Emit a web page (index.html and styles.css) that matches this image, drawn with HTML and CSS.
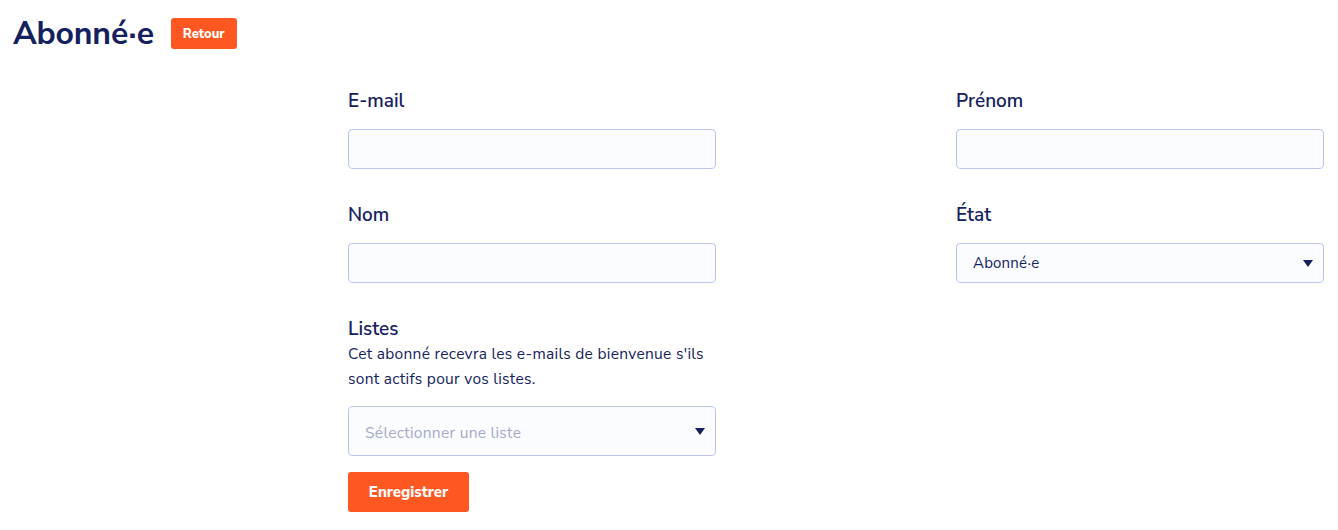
FILE: index.html
```html
<!DOCTYPE html>
<html lang="fr">
<head>
<meta charset="utf-8">
<title>Abonné·e</title>
<link rel="stylesheet" href="styles.css">
</head>
<body>
<div class="page">
  <header class="header">
    <h1 class="title">Abonné·e</h1>
    <button class="btn btn-small" type="button">Retour</button>
  </header>
  <form class="form">
    <div class="field">
      <label class="label">E-mail</label>
      <input class="input" type="text">
    </div>
    <div class="field">
      <label class="label">Prénom</label>
      <input class="input" type="text">
    </div>
    <div class="field">
      <label class="label">Nom</label>
      <input class="input" type="text">
    </div>
    <div class="field">
      <label class="label">État</label>
      <div class="select">
        <span class="select-value">Abonné·e</span>
        <svg class="caret" width="10" height="7" viewBox="0 0 10 7"><path d="M0 0H10L5 7Z" fill="#14215e"/></svg>
      </div>
    </div>
    <div class="field">
      <label class="label label-tight">Listes</label>
      <p class="help">Cet abonné recevra les e-mails de bienvenue s'ils sont actifs pour vos listes.</p>
      <div class="select select-tall">
        <span class="select-placeholder">Sélectionner une liste</span>
        <svg class="caret" width="10" height="7" viewBox="0 0 10 7"><path d="M0 0H10L5 7Z" fill="#14215e"/></svg>
      </div>
      <button class="btn btn-save" type="button">Enregistrer</button>
    </div>
  </form>
</div>
</body>
</html>
```
FILE: styles.css
```css
* { box-sizing: border-box; }
body {
  margin: 0;
  background: #fff;
  color: #14215e;
  font-family: "Nunito Sans", Lato, "Open Sans", sans-serif;
}
.page { padding: 18px 14px 0 13px; }
.header {
  display: flex;
  align-items: center;
  gap: 17px;
}
.title {
  margin: 0;
  font-size: 32px;
  font-weight: 700;
  line-height: 31px;
  letter-spacing: -0.2px;
}
.btn {
  border: 0;
  background: #ff5722;
  color: #fff;
  font-family: inherit;
  font-weight: 800;
  border-radius: 3px;
  cursor: pointer;
}
.btn-small {
  height: 31px;
  padding: 0 12px;
  font-size: 13px;
}
.form {
  margin: 39px 0 0 335px;
  display: grid;
  grid-template-columns: 368px 368px;
  column-gap: 240px;
  row-gap: 33px;
  align-items: start;
}
.field { display: flex; flex-direction: column; align-items: flex-start; }
.label {
  font-size: 19px;
  font-weight: 600;
  line-height: 24px;
  padding-top: 1px;
  margin-bottom: 16px;
}
.label-tight { margin-bottom: 0; }
.input, .select {
  width: 368px;
  height: 40px;
  border: 1px solid #bcc5ef;
  border-radius: 4px;
  background: #fbfcff;
}
.select {
  display: flex;
  align-items: center;
  justify-content: space-between;
  padding: 0 10px 0 16px;
  font-size: 15px;
  letter-spacing: 0.2px;
}
.select-tall { height: 50px; }
.select-tall .select-placeholder { font-size: 15.5px; letter-spacing: 0.3px; padding-top: 3px; }
.select-value { color: #14215e; }
.select-placeholder { color: #a4a9cb; }
.help {
  margin: 0 0 15px;
  font-size: 15.5px;
  line-height: 25px;
  letter-spacing: 0.3px;
}
.btn-save {
  margin-top: 16px;
  height: 40px;
  width: 121px;
  font-size: 15px;
}
```
